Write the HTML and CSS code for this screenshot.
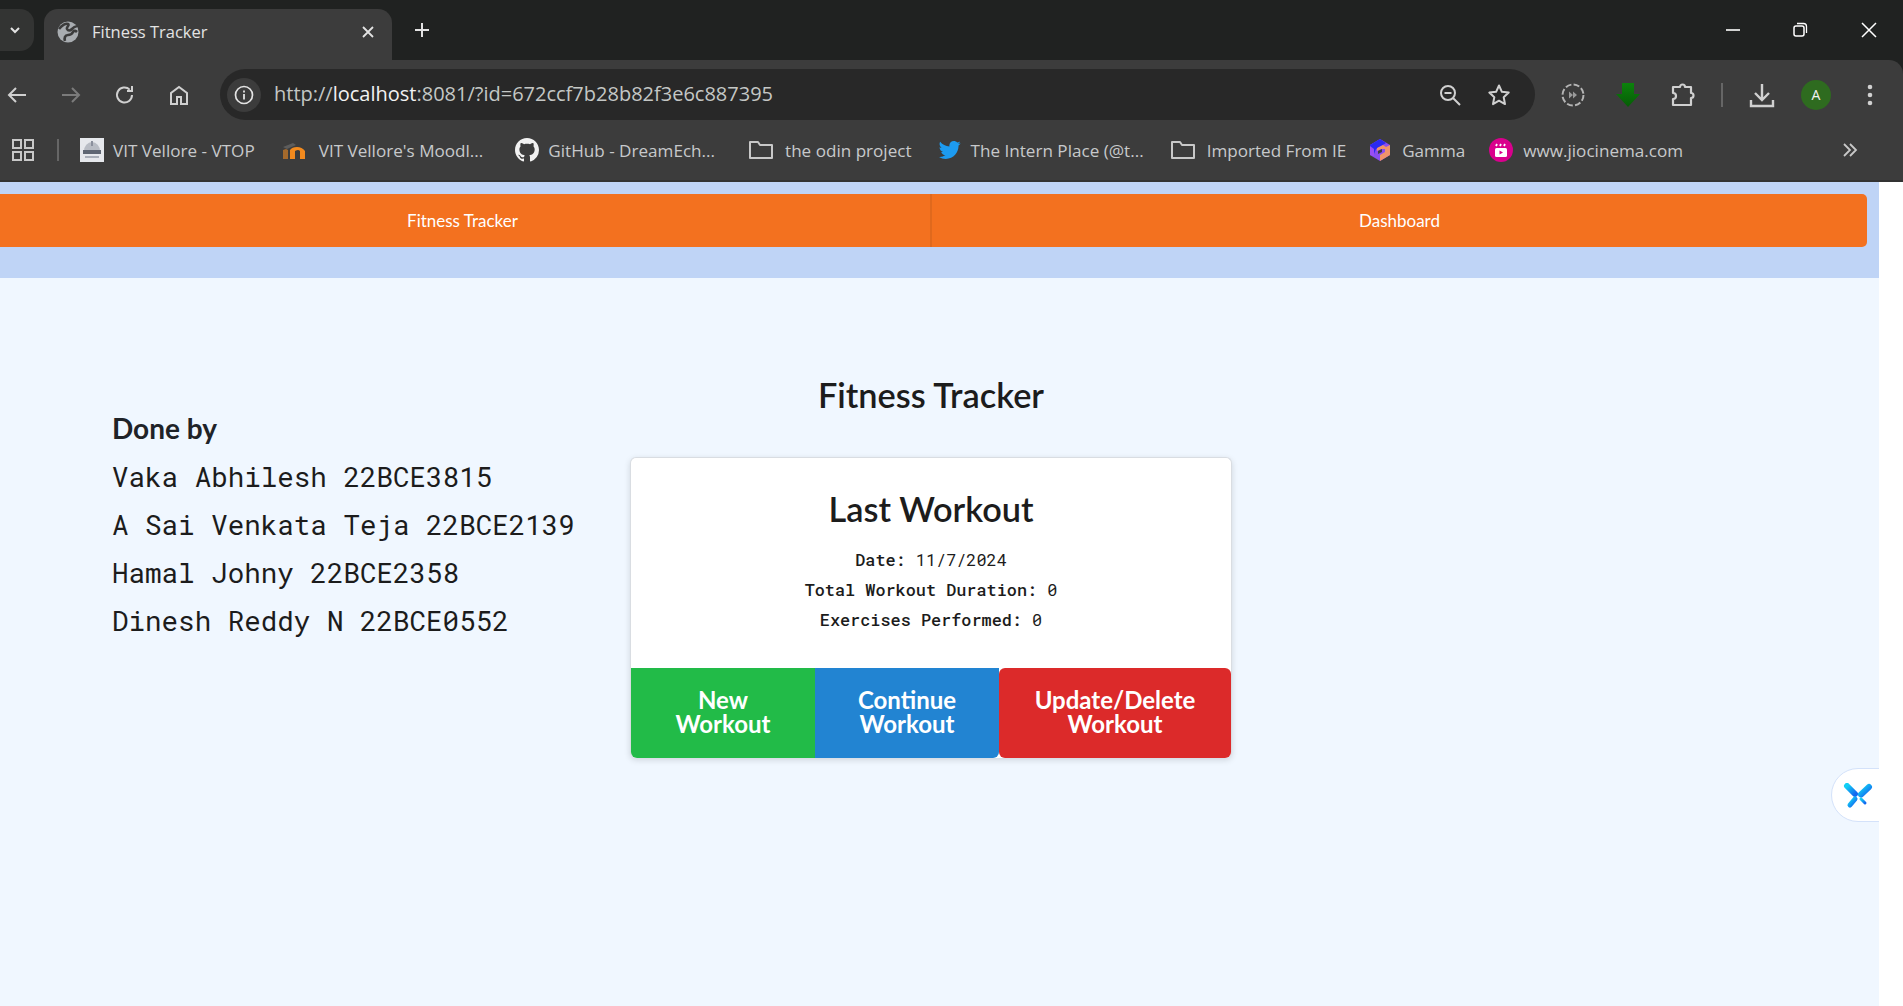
FILE: index.html
```html
<!DOCTYPE html>
<html lang="en">
<head>
  <meta charset="UTF-8">
  <title>Fitness Tracker</title>
  <link rel="stylesheet" href="styles.css">
</head>
<body>
  <!-- browser frame -->
  <header class="chrome">
    <div class="tabstrip">
      <div class="tab-search">
        <svg width="14" height="14" viewBox="0 0 14 14"><path d="M3 5l4 4 4-4" fill="none" stroke="#e3e3e3" stroke-width="2"/></svg>
      </div>
      <div class="tab">
        <svg class="globe" width="22" height="22" viewBox="0 0 22 22"><circle cx="11" cy="11" r="10.500" fill="#a9adb1"/><path d="M2 8c3-4 7-6 9-5 2 1-2 3-1 5s3 2 5 0 4-3 5-2M8 20c-1-3 0-6 3-6s4-1 5-3 3-1 4 0" fill="none" stroke="#3c3c3c" stroke-width="2.600"/></svg>
        <span class="tab-title">Fitness Tracker</span>
        <svg class="tab-close" width="14" height="14" viewBox="0 0 14 14"><path d="M2 2l10 10M12 2L2 12" stroke="#e3e3e3" stroke-width="1.8"/></svg>
      </div>
      <svg class="new-tab" width="18" height="18" viewBox="0 0 18 18"><path d="M9 2v14M2 9h14" stroke="#e3e3e3" stroke-width="2"/></svg>
      <div class="window-btns">
        <svg class="win-min" width="16" height="16" viewBox="0 0 16 16"><path d="M1 8h14" stroke="#fff" stroke-width="1.6"/></svg>
        <svg width="16" height="16" viewBox="0 0 16 16"><rect x="2" y="4" width="10" height="10" rx="2" fill="none" stroke="#fff" stroke-width="1.5"/><path d="M5 1.5h6.500a3 3 0 0 1 3 3V11" fill="none" stroke="#fff" stroke-width="1.300"/></svg>
        <svg width="16" height="16" viewBox="0 0 16 16"><path d="M1 1l14 14M15 1L1 15" stroke="#fff" stroke-width="1.500"/></svg>
      </div>
    </div>

    <div class="toolbar">
      <svg class="tool-icon" width="22" height="22" viewBox="0 0 22 22"><path d="M20 11H3M10 4l-7 7 7 7" fill="none" stroke="#d0d0d0" stroke-width="2"/></svg>
      <svg class="tool-icon" width="22" height="22" viewBox="0 0 22 22"><path d="M2 11h17M12 4l7 7-7 7" fill="none" stroke="#7b7b7b" stroke-width="2"/></svg>
      <svg class="tool-icon" width="22" height="22" viewBox="0 0 22 22"><path d="M18 11a7.500 7.500 0 1 1-2.300-5.400M18 2v5h-5" fill="none" stroke="#d0d0d0" stroke-width="2"/></svg>
      <svg class="tool-icon" width="22" height="22" viewBox="0 0 22 22"><path d="M3 20V9l8-6 8 6v11h-6v-7H9v7z" fill="none" stroke="#d0d0d0" stroke-width="2"/></svg>
      <div class="omnibox">
        <div class="site-chip">
          <svg width="20" height="20" viewBox="0 0 20 20"><circle cx="10" cy="10" r="8.500" fill="none" stroke="#e3e3e3" stroke-width="1.700"/><path d="M10 9v5.500M10 5.500v2" stroke="#e3e3e3" stroke-width="1.800"/></svg>
        </div>
        <span class="url">http://<b>localhost</b>:8081/?id=672ccf7b28b82f3e6c887395</span>
        <svg class="omni-icon" width="24" height="24" viewBox="0 0 24 24"><circle cx="10" cy="10" r="7" fill="none" stroke="#d0d0d0" stroke-width="2"/><path d="M6.500 10h7M15 15l7 7" stroke="#d0d0d0" stroke-width="2"/></svg>
        <svg class="omni-icon" width="24" height="24" viewBox="0 0 24 24"><path d="M12 2.500l2.900 6.300 6.800.8-5 4.700 1.300 6.800-6-3.400-6 3.400 1.300-6.800-5-4.700 6.800-.8z" fill="none" stroke="#d0d0d0" stroke-width="2" stroke-linejoin="round"/></svg>
      </div>
      <div class="tool-right">
        <svg class="ext-media" width="24" height="24" viewBox="0 0 24 24"><circle cx="12" cy="12" r="10.500" fill="none" stroke="#b5b5b5" stroke-width="2" stroke-dasharray="6 2.300"/><path d="M8 8.500l4 3.500-4 3.500zM12 8.500l4 3.500-4 3.500z" fill="#9a9a9a"/></svg>
        <svg class="ext-arrow" width="26" height="26" viewBox="0 0 26 26"><defs><linearGradient id="arrow" x1="0" y1="0" x2="0" y2="1"><stop offset="0" stop-color="#0c820c"/><stop offset="1" stop-color="#065c06"/></linearGradient></defs><path d="M7 1h12v11h6L13 25 1 12h6z" fill="url(#arrow)"/></svg>
        <svg class="ext-puzzle" width="26" height="26" viewBox="0 0 26 26"><path d="M3 5h7a2.500 2.500 0 0 1 5 0h6v6a2.500 2.500 0 0 1 0 5v7H3v-6a3 3 0 0 0 0-6z" fill="none" stroke="#d0d0d0" stroke-width="2.200" stroke-linejoin="round"/></svg>
        <span class="tool-sep"></span>
        <svg class="ext-download" width="26" height="26" viewBox="0 0 26 26"><path d="M13 2v15M6 11l7 7 7-7M2 18v6h22v-6" fill="none" stroke="#d0d0d0" stroke-width="2.400"/></svg>
        <span class="avatar">A</span>
        <svg class="kebab" width="8" height="24" viewBox="0 0 8 24"><circle cx="4" cy="4" r="2.300" fill="#d0d0d0"/><circle cx="4" cy="12" r="2.300" fill="#d0d0d0"/><circle cx="4" cy="20" r="2.300" fill="#d0d0d0"/></svg>
      </div>
    </div>

    <div class="bookmarks">
      <svg class="apps" width="22" height="22" viewBox="0 0 22 22"><g fill="none" stroke="#c8c8c8" stroke-width="2"><rect x="1" y="1" width="8" height="8"/><rect x="13" y="1" width="8" height="8"/><rect x="1" y="13" width="8" height="8"/><rect x="13" y="13" width="8" height="8"/></g></svg>
      <span class="bm-sep"></span>
      <div class="bm bm-vtop">
        <svg width="24" height="24" viewBox="0 0 24 24"><rect width="24" height="24" fill="#e6e8ec"/><path d="M4 13a8 9 0 0 1 16 0z" fill="#b8bcc4"/><path d="M11 3h2v5h-2z" fill="#8a8f9c"/><path d="M3 12h18v4H3z" fill="#5f6673"/><path d="M5 19h14" stroke="#a9aeb8" stroke-width="2"/></svg>
        <span>VIT Vellore - VTOP</span>
      </div>
      <div class="bm bm-moodle">
        <svg width="24" height="24" viewBox="0 0 24 24"><path d="M1 9l10-4 3 2-9 4z" fill="#5c5c5c"/><path d="M1 21v-9l3-1 2 1v9z" fill="#a56a2c"/><path d="M8 21v-9q2-3 7-3t8 4v8h-5v-8q-1-1-2-1t-3 1v8z" fill="#f28a1e"/></svg>
        <span>VIT Vellore's Moodl...</span>
      </div>
      <div class="bm bm-github">
        <svg width="24" height="24" viewBox="0 0 16 16"><path fill="#f2f2f2" d="M8 0C3.580 0 0 3.580 0 8c0 3.540 2.290 6.530 5.470 7.590.4.070.55-.17.55-.38 0-.19-.01-.82-.01-1.490-2.010.37-2.530-.49-2.690-.94-.09-.23-.48-.94-.82-1.130-.28-.15-.68-.52-.01-.53.63-.01 1.080.58 1.230.82.720 1.210 1.870.87 2.330.66.070-.52.280-.87.510-1.070-1.780-.2-3.640-.89-3.640-3.950 0-.87.310-1.590.820-2.150-.08-.2-.36-1.020.08-2.120 0 0 .67-.21 2.200.82.640-.18 1.320-.27 2-.27s1.360.09 2 .27c1.530-1.040 2.200-.82 2.200-.82.440 1.100.16 1.920.08 2.120.51.560.82 1.270.82 2.150 0 3.070-1.870 3.750-3.650 3.950.29.250.54.730.54 1.480 0 1.070-.01 1.930-.01 2.200 0 .21.150.46.550.38A8.010 8.010 0 0 0 16 8c0-4.420-3.580-8-8-8z"/></svg>
        <span>GitHub - DreamEch...</span>
      </div>
      <div class="bm bm-odin">
        <svg width="24" height="24" viewBox="0 0 24 24"><path d="M1 19V4h8l2 3h12v13H1z" fill="none" stroke="#c8c8c8" stroke-width="2" stroke-linejoin="round"/></svg>
        <span>the odin project</span>
      </div>
      <div class="bm bm-intern">
        <svg width="22" height="22" viewBox="0 0 24 24"><path fill="#1d9bf0" d="M23.600 4.600c-.9.400-1.800.7-2.800.8 1-.6 1.800-1.600 2.100-2.700-.9.600-2 1-3.100 1.200C18.900 2.900 17.600 2.300 16.200 2.300c-3.200 0-5.500 2.900-4.800 6C7.300 8.100 3.700 6.100 1.300 3.100.000 5.300.6 8.200 2.800 9.600c-.8 0-1.500-.2-2.200-.6 0 2.300 1.600 4.500 4 5-.7.200-1.500.2-2.200.1.600 2 2.500 3.400 4.600 3.400-2 1.600-4.600 2.300-7.200 2 2.200 1.400 4.800 2.200 7.500 2.200 9.100 0 14.300-7.700 14-14.600 1-.7 1.800-1.500 2.300-2.500z"/></svg>
        <span>The Intern Place (@t...</span>
      </div>
      <div class="bm bm-ie">
        <svg width="24" height="24" viewBox="0 0 24 24"><path d="M1 19V4h8l2 3h12v13H1z" fill="none" stroke="#c8c8c8" stroke-width="2" stroke-linejoin="round"/></svg>
        <span>Imported From IE</span>
      </div>
      <div class="bm bm-gamma">
        <svg width="22" height="24" viewBox="0 0 22 24"><path d="M11 1l10 6v10l-10 6L1 17V7z" fill="#8a4df0"/><path d="M11 1l6 4-10 6-2 5-4 1V7z" fill="#2a2af0"/><path d="M1 8l4 3v7l-4-1z" fill="#9a4df5"/><path d="M21 7v10l-10 6v-6l5-3v-3h-4l-4 2 0-3 6-3 3 2z" fill="#f0936a"/><path d="M9 13l4-2v3l-4 2z" fill="#3c3c3c"/></svg>
        <span>Gamma</span>
      </div>
      <div class="bm bm-jio">
        <svg width="24" height="24" viewBox="0 0 24 24"><circle cx="12" cy="12" r="12" fill="#d9008d"/><rect x="6" y="10" width="12" height="9" rx="1.500" fill="#fff"/><path d="M7 8l1-2M11 8l1-2M15 8l1-2" stroke="#fff" stroke-width="1.800"/><path d="M10.500 12.500l3.500 2-3.500 2z" fill="#d9008d"/></svg>
        <span>www.jiocinema.com</span>
      </div>
      <svg class="bm-more" width="16" height="16" viewBox="0 0 16 16"><path d="M2 2l6 6-6 6M8 2l6 6-6 6" fill="none" stroke="#c8c8c8" stroke-width="1.800"/></svg>
    </div>
  </header>

  <!-- the app -->
  <div class="page">
    <nav class="navbar">
      <div class="nav-links">
        <a class="nav-link nav-link-first">Fitness Tracker</a>
        <a class="nav-link">Dashboard</a>
      </div>
    </nav>

    <main class="content">
      <aside class="credits">
        <h2>Done by</h2>
        <p>Vaka Abhilesh 22BCE3815</p>
        <p>A Sai Venkata Teja 22BCE2139</p>
        <p>Hamal Johny 22BCE2358</p>
        <p>Dinesh Reddy N 22BCE0552</p>
      </aside>

      <section class="tracker">
        <h1>Fitness Tracker</h1>
        <div class="card">
          <div class="card-body">
            <h2>Last Workout</h2>
            <p><b>Date:</b> 11/7/2024</p>
            <p><b>Total Workout Duration:</b> 0</p>
            <p><b>Exercises Performed:</b> 0</p>
          </div>
          <div class="card-actions">
            <button class="btn btn-new">New Workout</button>
            <button class="btn btn-continue">Continue Workout</button>
            <button class="btn btn-update">Update/Delete Workout</button>
          </div>
        </div>
      </section>
    </main>

    <div class="float-widget">
      <svg width="30" height="26" viewBox="0 0 30 26">
        <defs><linearGradient id="petal" x1="0" y1="0" x2="1" y2="1"><stop offset="0" stop-color="#12d0f5"/><stop offset="1" stop-color="#1268f0"/></linearGradient></defs>
        <g stroke="url(#petal)" stroke-linecap="round" fill="none">
          <path d="M4 3l8 8" stroke-width="6"/>
          <path d="M26 4l-8 7.500" stroke-width="6"/>
          <path d="M7 22l5-6" stroke-width="5"/>
          <path d="M18 16l4 4" stroke-width="3"/>
        </g>
      </svg>
    </div>
  </div>
</body>
</html>
```

FILE: styles.css
```css
* {
  box-sizing: border-box;
}

html, body {
  height: 100%;
}

body {
  margin: 0;
  overflow: hidden;
  background-color: white;
  font-family: Lato, Arial, sans-serif;
  color: #1c1c1c;
}

/* browser frame */
.chrome {
  height: 182px;
  background-color: #202221;
  font-family: "Open Sans", "Noto Sans", sans-serif;
  color: #d8d8d8;
}

.tabstrip {
  height: 60px;
  display: flex;
  align-items: flex-end;
}

.tab-search {
  width: 34px;
  height: 42px;
  margin-bottom: 9px;
  padding-right: 5px;
  background-color: #333433;
  border-radius: 0 14px 14px 0;
  display: flex;
  align-items: center;
  justify-content: center;
}

.tab {
  width: 348px;
  height: 51px;
  margin-left: 10px;
  padding: 0 17px 6px 13px;
  background-color: #3c3c3c;
  border-radius: 14px 14px 0 0;
  display: flex;
  align-items: center;
  gap: 13px;
}

.tab-title {
  flex: 1;
  font-size: 16.5px;
  color: #e3e3e3;
}

.new-tab {
  margin: 0 0 21px 21px;
}

.window-btns {
  margin: 0 26px 22px auto;
  display: flex;
  gap: 53px;
}

.win-min {
  margin-right: -2px;
}

.toolbar {
  height: 60px;
  background-color: #3c3c3c;
  border-radius: 0 14px 0 0;
  display: flex;
  align-items: center;
  padding: 9px 0 0 6px;
}

.tool-icon {
  margin-right: 32px;
}

.omnibox {
  width: 1315px;
  height: 51px;
  margin-left: -2px;
  background-color: #282828;
  border-radius: 26px;
  display: flex;
  align-items: center;
  padding: 0 24px 0 7px;
}

.site-chip {
  width: 34px;
  height: 34px;
  border-radius: 50%;
  background-color: #3c3c3c;
  display: flex;
  align-items: center;
  justify-content: center;
}

.url {
  flex: 1;
  margin-left: 13px;
  padding-bottom: 2px;
  font-size: 20px;
  color: #c4c7c5;
}

.url b {
  font-weight: 400;
  color: #f2f2f2;
}

.omni-icon {
  margin-left: 25px;
}

.tool-right {
  flex: 1;
  display: flex;
  align-items: center;
  padding-left: 26px;
}

.ext-arrow {
  margin-left: 30px;
}

.ext-puzzle {
  margin-left: 29px;
}

.tool-sep {
  width: 2px;
  height: 24px;
  margin-left: 25px;
  background-color: #666;
}

.ext-download {
  margin-left: 26px;
}

.avatar {
  width: 30px;
  height: 30px;
  margin-left: 26px;
  border-radius: 50%;
  background-color: #2e6b1f;
  color: #f2f2f2;
  font-size: 14px;
  display: flex;
  align-items: center;
  justify-content: center;
}

.kebab {
  margin-left: 35px;
}

.bookmarks {
  height: 62px;
  background-color: #3c3c3c;
  border-bottom: 2px solid #333;
  display: flex;
  align-items: center;
  padding-left: 12px;
  font-size: 17.1px;
}

.apps {
  flex-shrink: 0;
}

.bm-sep {
  width: 2px;
  height: 22px;
  margin-left: 23px;
  background-color: #666;
}

.bm {
  display: flex;
  align-items: center;
  gap: 9px;
  white-space: nowrap;
  color: #c7c9cb;
}

.bm-vtop { margin-left: 21px; }
.bm-moodle { margin-left: 27px; gap: 13px; }
.bm-github { margin-left: 32px; }
.bm-odin { margin-left: 34px; gap: 12px; }
.bm-intern { margin-left: 27px; gap: 10px; }
.bm-ie { margin-left: 27px; gap: 12px; }
.bm-gamma { margin-left: 23px; gap: 11px; }
.bm-jio { margin-left: 24px; gap: 10px; }

.bm-more {
  margin-left: auto;
  margin-right: 45px;
}

/* the app */
.page {
  position: relative;
  width: 1879px;
  height: calc(100% - 182px);
  background-color: #f0f7ff;
  overflow: hidden;
}

.navbar {
  height: 96px;
  padding: 12px 12px 0 0;
  background-color: #bfd4f6;
}

.nav-links {
  height: 53px;
  background-color: #f3711f;
  border-radius: 0 5px 5px 0;
  display: grid;
  grid-template-columns: 932px 1fr;
}

.nav-link {
  display: flex;
  align-items: center;
  justify-content: center;
  padding-bottom: 1px;
  color: white;
  font-size: 17px;
}

.nav-link-first {
  padding-right: 5px;
  border-right: 2px solid #e0691d;
}

.content {
  display: grid;
  grid-template-columns: 630px 602px;
  align-items: start;
}

.credits {
  padding: 134px 0 0 112px;
}

.credits h2 {
  margin: 0 0 8px;
  font-size: 28px;
  line-height: 32px;
  font-weight: 700;
  color: #1f2328;
}

.credits p {
  margin: 0;
  font-family: "Roboto Mono", "DejaVu Sans Mono", monospace;
  font-size: 27.55px;
  line-height: 48px;
  white-space: nowrap;
}

.tracker h1 {
  margin: 99px 0 44px;
  font-size: 34.3px;
  line-height: 36px;
  font-weight: 600;
  text-align: center;
}

.card {
  width: 602px;
  background-color: white;
  border: 1px solid #d9dde2;
  border-bottom: 0;
  border-radius: 6px;
  box-shadow: 0 2px 6px rgba(0, 0, 0, 0.14);
}

.card-body {
  padding: 31px 16px 33px;
  text-align: center;
}

.card-body h2 {
  margin: 0 0 16px;
  font-size: 34.3px;
  line-height: 40px;
  font-weight: 600;
}

.card-body p {
  margin: 0;
  font-family: "Roboto Mono", "DejaVu Sans Mono", monospace;
  font-size: 16.85px;
  line-height: 30px;
}

.card-body b {
  font-weight: 500;
}

.card-actions {
  display: grid;
  grid-template-columns: 184px 184px 1fr;
}

.btn {
  height: 90px;
  padding: 0 32px 3px;
  border: 0;
  color: white;
  font-family: Lato, Arial, sans-serif;
  font-size: 24px;
  line-height: 24px;
  font-weight: 700;
}

.btn-new {
  background-color: #22bb48;
  border-radius: 0 0 0 6px;
}

.btn-continue {
  background-color: #2284d2;
  border-radius: 0 0 6px 0;
}

.btn-update {
  background-color: #dc2a2a;
  border-radius: 6px;
}

.float-widget {
  position: absolute;
  top: 586px;
  right: -30px;
  width: 78px;
  height: 54px;
  padding: 2px 0 0 11px;
  background-color: white;
  border: 1px solid #d4e2fa;
  border-radius: 27px;
  display: flex;
  align-items: center;
}
```
